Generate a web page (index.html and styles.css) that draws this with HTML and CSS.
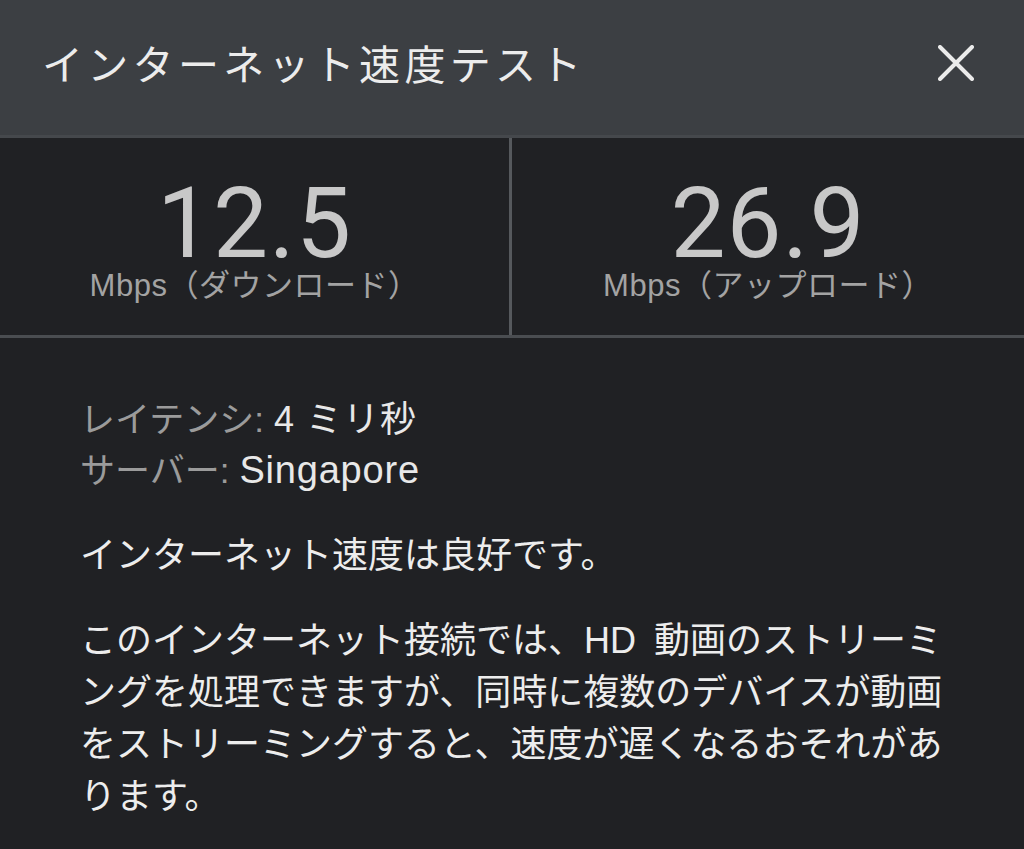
FILE: index.html
```html
<!DOCTYPE html>
<html lang="ja">
<head>
<meta charset="utf-8">
<link rel="stylesheet" href="styles.css">
</head>
<body>
<div class="dialog">
  <header class="header">
    <h1 class="title">インターネット速度テスト</h1>
    <button class="close" aria-label="閉じる">
      <svg viewBox="0 0 36 36" width="36" height="36"><path d="M2 2 L34 34 M34 2 L2 34" stroke="#ebebeb" stroke-width="4" stroke-linecap="round" fill="none"/></svg>
    </button>
  </header>
  <section class="metrics">
    <div class="metric">
      <div class="value">12.5</div>
      <div class="unit">Mbps（ダウンロード）</div>
    </div>
    <div class="metric">
      <div class="value">26.9</div>
      <div class="unit">Mbps（アップロード）</div>
    </div>
  </section>
  <section class="details">
    <div class="info">
      <div><span class="label">レイテンシ:</span> <span class="val">4 ミリ秒</span></div>
      <div><span class="label">サーバー:</span> <span class="val latin">Singapore</span></div>
    </div>
    <p class="summary">インターネット速度は良好です。</p>
    <p class="desc">このインターネット接続では、HD 動画のストリーミングを処理できますが、同時に複数のデバイスが動画をストリーミングすると、速度が遅くなるおそれがあります。</p>
  </section>
</div>
</body>
</html>
```

FILE: styles.css
```css
html, body {
  margin: 0;
  padding: 0;
  background: #202124;
}
body {
  font-family: "Liberation Sans", "Noto Sans CJK JP", sans-serif;
  color: #e8e8e8;
  width: 1024px;
  height: 849px;
  overflow: hidden;
}
.header {
  height: 138px;
  background: #3c3f43;
  border-bottom: 3px solid #45484c;
  display: flex;
  align-items: center;
  justify-content: space-between;
  padding: 0 50px 0 42px;
  box-sizing: border-box;
}
.title {
  margin: 0;
  font-weight: 400;
  font-size: 41px;
  color: #ececec;
  letter-spacing: 4.3px;
  position: relative;
  top: -6px;
}
.close {
  background: none;
  border: 0;
  padding: 0;
  width: 36px;
  height: 36px;
  display: block;
  position: relative;
  top: -5px;
}
.close svg { display: block; }
.metrics {
  display: grid;
  grid-template-columns: 1fr 1fr;
  height: 197px;
  border-bottom: 3px solid #4a4d51;
}
.metric {
  display: flex;
  flex-direction: column;
  align-items: center;
  padding-top: 46px;
}
.metric:first-child {
  border-right: 3px solid #56595d;
}
.value {
  font-family: "Roboto", "Liberation Sans", sans-serif;
  font-size: 98px;
  line-height: 80px;
  color: #c8c8c8;
  letter-spacing: 1px;
}
.unit {
  font-size: 31px;
  line-height: 36px;
  color: #a3a3a3;
  margin-top: 4px;
  letter-spacing: 0.5px;
}
.details {
  padding: 56px 0 0 80px;
  font-size: 36px;
  line-height: 52px;
}
.info { line-height: 51px; }
.info .label { color: #9b9b9b; font-size: 35px; }
.info .val { color: #e8e8e8; letter-spacing: 1px; }
.info .latin { font-size: 38px; letter-spacing: 0.8px; }
.summary {
  margin: 34px 0 0 0;
  color: #ededed;
}
.desc {
  margin: 33px 0 0 0;
  width: 872px;
  word-spacing: 8px;
  color: #ededed;
}
```
